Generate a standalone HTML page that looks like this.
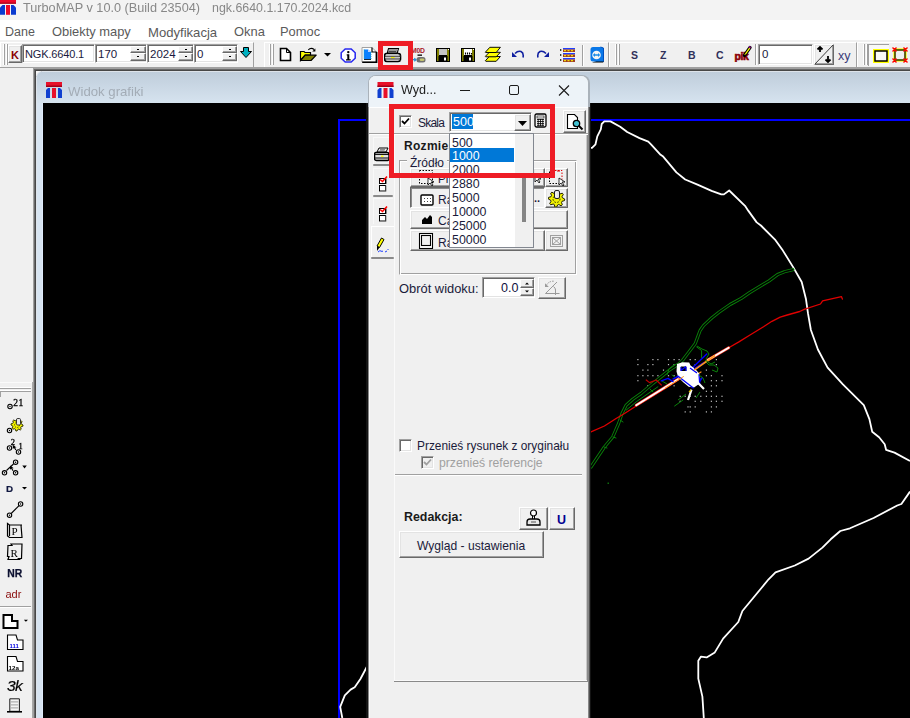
<!DOCTYPE html>
<html><head><meta charset="utf-8">
<style>
*{margin:0;padding:0;box-sizing:border-box}
html,body{width:910px;height:718px;overflow:hidden;background:#f0f0f0;font-family:"Liberation Sans",sans-serif;font-size:12px;color:#000}
.a{position:absolute}
.t{position:absolute;white-space:pre;line-height:1}
#titlebar{left:0;top:0;width:910px;height:20px;background:#f3f3f3}
#menubar{left:0;top:20px;width:910px;height:20px;background:#fff}
#toolbar{left:0;top:40px;width:910px;height:27px;background:#f0f0f0}
.sunk{border-style:solid;border-width:2px;border-color:#808080 #fff #fff #808080;background:#fff}
.sunk::before{content:"";position:absolute;left:-1px;top:-1px;right:-1px;bottom:-1px;border-style:solid;border-width:1px;border-color:#404040 #e3e3e3 #e3e3e3 #404040}
.raised{background:#f0f0f0;border-style:solid;border-width:1px;border-color:#fff #696969 #696969 #fff;box-shadow:inset -1px -1px 0 #a0a0a0}
.grip{width:4px;border-left:1px solid #fff;border-right:1px solid #a0a0a0;box-shadow:-1px 0 0 #a0a0a0}
.tb{background:#fff;border-style:solid;border-width:1px;border-color:#a0a0a0 #fff #fff #a0a0a0;box-shadow:inset 1px 1px 0 #696969,inset -1px -1px 0 #e3e3e3}
.btn3{background:#f0f0f0;border-style:solid;border-width:1px;border-color:#fff #696969 #696969 #fff;box-shadow:inset -1px -1px 0 #a0a0a0,inset 1px 1px 0 #e3e3e3}
.spin{background:#f0f0f0;border-style:solid;border-width:1px;border-color:#fff #696969 #696969 #fff;box-shadow:inset -1px -1px 0 #a0a0a0}
.spin2{background:#f0f0f0;border-style:solid;border-width:1px;border-color:#fff #696969 #696969 #fff;box-shadow:inset -1px -1px 0 #a0a0a0}
.spin::after{content:"";position:absolute;left:50%;top:50%;width:2px;height:1px;margin-left:-1px;margin-top:-1px;background:#000}
</style></head><body>

<!-- title bar -->
<div id="titlebar" class="a">
  <svg class="a" style="left:0;top:0" width="17" height="16" viewBox="0 0 17 16"><rect x="0" y="0" width="16" height="3.7" fill="#ee0a2a"/><rect x="0" y="2.6" width="16" height="1.1" fill="#a0001a"/><path d="M0 14.8V7.5L2.5 5H5V14.8z" fill="#0a3ad0"/><rect x="6" y="5" width="4" height="9.8" fill="#ee0a2a"/><path d="M11 5H13.5L16 7.5V14.8H11z" fill="#0a3ad0"/></svg>
  <div class="t" style="left:23px;top:2px;font-size:12.7px;color:#888;will-change:transform">TurboMAP v 10.0 (Build 23504)</div>
  <div class="t" style="left:212px;top:2px;font-size:12.4px;color:#888;will-change:transform">ngk.6640.1.170.2024.kcd</div>
</div>

<!-- menu bar -->
<div id="menubar" class="a">
  <div class="t" style="left:5px;top:6px;font-size:12.5px;color:#5a5a5a">Dane</div>
  <div class="t" style="left:52px;top:6px;font-size:12.9px;color:#5a5a5a">Obiekty mapy</div>
  <div class="t" style="left:148px;top:6px;font-size:13.1px;color:#5a5a5a">Modyfikacja</div>
  <div class="t" style="left:234px;top:6px;font-size:12.9px;color:#5a5a5a">Okna</div>
  <div class="t" style="left:280px;top:6px;font-size:12.9px;color:#5a5a5a">Pomoc</div>
</div>

<!-- toolbar -->

<div id="toolbar" class="a">
  <!-- band 1 -->
  <div class="a" style="left:0;top:2px;width:254px;height:25px;border-top:1px solid #fff;border-left:1px solid #fff;border-right:1px solid #a0a0a0"></div>
  <div class="a" style="left:3px;top:4px;width:1px;height:21px;background:#fff"></div><div class="a" style="left:4px;top:4px;width:1px;height:21px;background:#a0a0a0"></div>
  <div class="a" style="left:6px;top:4px;width:1px;height:21px;background:#fff"></div><div class="a" style="left:7px;top:4px;width:1px;height:21px;background:#a0a0a0"></div>
  <div class="a btn3" style="left:8px;top:5px;width:14px;height:18px"></div>
  <div class="t" style="left:11px;top:10px;font-size:11px;font-weight:700;color:#8b0000">K</div>
  <div class="a tb" style="left:22px;top:4px;width:73px;height:19px"></div>
  <div class="t" style="left:25px;top:9px;font-size:11px;letter-spacing:-0.15px;color:#1a1a40">NGK.6640.1</div>
  <div class="a tb" style="left:95px;top:4px;width:52px;height:19px"></div>
  <div class="t" style="left:98px;top:9px;font-size:11.5px;color:#1a1a40">170</div>
  <div class="a spin" style="left:130px;top:6px;width:16px;height:7px"></div>
  <div class="a spin" style="left:130px;top:13px;width:16px;height:8px"></div>
  <div class="a tb" style="left:147px;top:4px;width:47px;height:19px"></div>
  <div class="t" style="left:150px;top:9px;font-size:11.5px;color:#1a1a40">2024</div>
  <div class="a spin" style="left:178px;top:6px;width:15px;height:7px"></div>
  <div class="a spin" style="left:178px;top:13px;width:15px;height:8px"></div>
  <div class="a tb" style="left:194px;top:4px;width:44px;height:19px"></div>
  <div class="t" style="left:197px;top:9px;font-size:11.5px;color:#1a1a40">0</div>
  <div class="a spin" style="left:222px;top:6px;width:15px;height:7px"></div>
  <div class="a spin" style="left:222px;top:13px;width:15px;height:8px"></div>
  <svg class="a" style="left:240px;top:7px" width="12" height="11" viewBox="0 0 12 11"><path d="M3.5 0.5h5v4h3l-5.5 6-5.5-6h3z" fill="#00b0c0" stroke="#000" stroke-width="1"/></svg>

  <!-- band 2 -->
  <div class="a" style="left:264px;top:2px;width:345px;height:25px;border-top:1px solid #fff;border-left:1px solid #fff;border-right:1px solid #a0a0a0"></div>
  <div class="a" style="left:269px;top:4px;width:1px;height:21px;background:#fff"></div><div class="a" style="left:270px;top:4px;width:1px;height:21px;background:#a0a0a0"></div>
  <div class="a" style="left:272px;top:4px;width:1px;height:21px;background:#fff"></div><div class="a" style="left:273px;top:4px;width:1px;height:21px;background:#a0a0a0"></div>
  <svg class="a" style="left:279px;top:7px" width="13" height="15" viewBox="0 0 13 15"><path d="M1.5 1.5h6l4 4v8h-10z" fill="#fff" stroke="#000" stroke-width="1.6"/><path d="M7.5 1.5v4h4" fill="none" stroke="#000" stroke-width="1"/></svg>
  <svg class="a" style="left:299px;top:6px" width="19" height="16" viewBox="0 0 19 16"><path d="M1.5 14.5V5.5H5L6 6.5H11.5V9.2H6L1.5 14.5Z" fill="#ffff00" stroke="#000" stroke-width="1.2"/><path d="M1.5 14.5L6.2 9.2H17.2L12 14.5Z" fill="#808000" stroke="#000" stroke-width="1.2" stroke-linejoin="round"/><path d="M9.3 3.9Q12 1.2 15.2 3.6" fill="none" stroke="#000" stroke-width="1.2"/><path d="M13.2 5.6H16.4V2.4Z" fill="#000"/></svg>
  <svg class="a" style="left:324px;top:13px" width="8" height="4" viewBox="0 0 8 4"><path d="M0 0h7l-3.5 3.5z" fill="#000"/></svg>
  <svg class="a" style="left:340px;top:8px" width="17" height="15" viewBox="0 0 17 15"><path d="M5.2 1h6l4 3.8v5.4l-4 3.8h-6l-4-3.8V4.8z" fill="#fff" stroke="#2828f0" stroke-width="1.5"/><circle cx="8.3" cy="4.1" r="1.2" fill="#000"/><path d="M6.7 6.2h2.6v5h1.4v1.3H6V11.2h1.3V7.5H6.7z" fill="#000"/></svg>
  <svg class="a" style="left:361px;top:7px" width="17" height="16" viewBox="0 0 17 16"><path d="M1 0.5h10l4.5 4.5v10H1z" fill="#fff" stroke="#a0a0a0" stroke-width="1"/><path d="M15.5 5v10.3H1.2" fill="none" stroke="#000" stroke-width="1.8"/><path d="M11 0.5v4.5h4.5" fill="none" stroke="#000" stroke-width="1.2"/><path d="M3 2.5h4l3 2.5v7.5H3z" fill="#0a80ff"/><path d="M3 2.5v10M10 5v7.5" stroke="#20a0a0" stroke-width="0.8" stroke-dasharray="1 1"/><path d="M7 2.5v2.5h3" fill="#c0d0ff"/><path d="M3 12.5h7" stroke="#000" stroke-width="0.8"/></svg>
  <!-- printer -->
  <svg class="a" style="left:384px;top:7px" width="18" height="16" viewBox="0 0 18 16"><path d="M4.5 1.5h10l-1.2 4.5H3.3z" fill="#fff" stroke="#000" stroke-width="1.1"/><path d="M5 3h8M4.5 4.6h8" stroke="#000" stroke-width="0.8"/><path d="M2.5 6.5q-2 0-2 2.5v2.5q0 3 2.5 3h11q2.5 0 2.5-2.5V9q0-2.5-2-2.5z" fill="#fff" stroke="#000" stroke-width="1.6"/><rect x="1.5" y="9.8" width="14.5" height="1.6" fill="#c8c8c8"/><rect x="7" y="9.8" width="3.5" height="1.4" fill="#f0f000"/><path d="M1 9.2h15.5M1 12h15.5" stroke="#000" stroke-width="0.9"/><path d="M14 6.8l2.5 2.5M14 11.5l2.5 2" stroke="#808080" stroke-width="0.8"/></svg>
  <!-- MOD -->
  <div class="t" style="left:411px;top:8px;font-size:6.8px;font-weight:700;color:#a81828;letter-spacing:-0.2px">M0D</div>
  <svg class="a" style="left:411px;top:14px" width="16" height="10" viewBox="0 0 16 10"><rect x="6.5" y="0.5" width="4.5" height="1.3" fill="#000"/><rect x="5.5" y="3" width="9" height="5.5" rx="2.5" fill="#707070"/><ellipse cx="11" cy="5.8" rx="2.5" ry="1.2" fill="#c8c870"/><path d="M1 5.7h4M3.3 4.2l1.7 1.5-1.7 1.5" stroke="#3090d0" stroke-width="1.2" fill="none"/></svg>
  <!-- save 1 -->
  <svg class="a" style="left:436px;top:8px" width="14" height="14" viewBox="0 0 14 14"><rect x="0.5" y="0.5" width="13" height="13" fill="#808000" stroke="#000"/><rect x="3" y="1" width="8" height="6" fill="#c4c4c4"/><path d="M3 7.5h8" stroke="#000"/><rect x="2.5" y="8" width="9" height="5.5" fill="#000"/><rect x="8" y="9.5" width="2" height="3" fill="#fff"/><rect x="12" y="1" width="1" height="1" fill="#fff"/></svg>
  <!-- save 2 -->
  <svg class="a" style="left:461px;top:8px" width="14" height="14" viewBox="0 0 14 14"><rect x="0.5" y="0.5" width="13" height="13" fill="#808000" stroke="#000"/><rect x="3" y="1" width="8" height="6" fill="#fff"/><path d="M3 7.5h8" stroke="#000"/><path d="M4.5 4.5v2M6.5 4.5v2M8.5 4.5v2M10.5 5v1.5" stroke="#000" stroke-width="1.1"/><rect x="2.5" y="8" width="9" height="5.5" fill="#000"/><rect x="8" y="9.5" width="2" height="3" fill="#fff"/><rect x="12" y="1" width="1" height="1" fill="#fff"/></svg>
  <!-- layers -->
  <svg class="a" style="left:484px;top:6px" width="18" height="17" viewBox="0 0 18 17"><g fill="#ffff00" stroke="#000" stroke-width="0.95" stroke-linejoin="round"><path d="M1.3 14.8L5.3 10.5H16.4L12.2 15.3H1.8z"/><path d="M1.3 10.4L5.3 6.3H16.4L12.2 10.8H1.8z"/><path d="M1.3 6.3L5.8 1.3H16.4L12.2 6.5H1.8z"/></g></svg>
  <!-- undo -->
  <svg class="a" style="left:512px;top:10px" width="13" height="9" viewBox="0 0 13 9"><path d="M3 3.5Q6 0.5 9 1.5Q12 3 11 7.5" fill="none" stroke="#1020a0" stroke-width="1.6"/><path d="M0 2v5h5z" fill="#1020a0"/></svg>
  <svg class="a" style="left:536px;top:10px" width="13" height="9" viewBox="0 0 13 9"><path d="M10 3.5Q7 0.5 4 1.5Q1 3 2 7.5" fill="none" stroke="#1020a0" stroke-width="1.6"/><path d="M13 2v5H8z" fill="#1020a0"/></svg>
  <!-- list -->
  <svg class="a" style="left:560px;top:8px" width="16" height="14" viewBox="0 0 16 14"><g id="lrow"><path d="M0 1l2 1-2 1z" fill="#000"/><rect x="3" y="0" width="12" height="1.4" fill="#2040ff"/><rect x="3" y="1.4" width="12" height="2.6" fill="#a04020"/><path d="M4 2.7h2M7.5 2.7h2M11 2.7h2" stroke="#ffff00" stroke-width="1"/></g><use href="#lrow" y="5"/><use href="#lrow" y="10"/></svg>
  <div class="a" style="left:582px;top:5px;width:1px;height:21px;background:#a0a0a0"></div><div class="a" style="left:583px;top:5px;width:1px;height:21px;background:#fff"></div>
  <!-- teamviewer -->
  <svg class="a" style="left:589px;top:6px" width="17" height="18" viewBox="0 0 17 18"><path d="M3 16.5h11l1-1v-3z" fill="#000"/><path d="M1.5 1h10l3 1v13.5H4q-2.5 0-2.5-2.5V3.5q0-2.5 2.5-2.5z" fill="#0a78e8"/><path d="M11.5 1l3 1v13.5" fill="none" stroke="#0050c0" stroke-width="1"/><circle cx="7.5" cy="9" r="4.3" fill="#f4f4f4"/><path d="M3.8 9l2.2-2v1.2h3V7l2.2 2-2.2 2V9.8h-3V11z" fill="#1a8ae8"/></svg>

  <!-- band 3 -->
  <div class="a" style="left:609px;top:2px;width:248px;height:25px;border-top:1px solid #fff;border-left:1px solid #fff;border-right:1px solid #a0a0a0"></div>
  <div class="a" style="left:615px;top:4px;width:1px;height:21px;background:#fff"></div><div class="a" style="left:616px;top:4px;width:1px;height:21px;background:#a0a0a0"></div>
  <div class="a" style="left:618px;top:4px;width:1px;height:21px;background:#fff"></div><div class="a" style="left:619px;top:4px;width:1px;height:21px;background:#a0a0a0"></div>
  <div class="t" style="left:631px;top:10px;font-size:10.5px;font-weight:700;color:#30305a">S</div>
  <div class="t" style="left:660px;top:10px;font-size:10.5px;font-weight:700;color:#30305a">Z</div>
  <div class="t" style="left:688px;top:10px;font-size:10.5px;font-weight:700;color:#30305a">B</div>
  <div class="t" style="left:716px;top:10px;font-size:10.5px;font-weight:700;color:#30305a">C</div>
  <svg class="a" style="left:733px;top:10px" width="20" height="12" viewBox="0 0 20 12"><text x="1.5" y="9.5" font-size="10.5" font-weight="700" font-family="Liberation Sans" fill="#8c0008" stroke="#8c0008" stroke-width="0.6" letter-spacing="-0.4">pik</text></svg>
  <svg class="a" style="left:742px;top:5px" width="10" height="13" viewBox="0 0 10 13"><path d="M2.5 10.5L8 2.5" stroke="#000" stroke-width="3.2" stroke-linecap="round"/><path d="M2.8 10L7.8 2.8" stroke="#ffff00" stroke-width="1.3"/><path d="M7.3 2.8l1-1.3" stroke="#900090" stroke-width="2"/><path d="M1.5 11.8l1.5-2.5 1.2 0.8z" fill="#000"/></svg>
  <div class="a" style="left:755px;top:4px;width:1px;height:21px;background:#a0a0a0"></div><div class="a" style="left:756px;top:4px;width:1px;height:21px;background:#fff"></div>
  <div class="a tb" style="left:758px;top:4px;width:55px;height:21px"></div>
  <div class="t" style="left:762px;top:9px;font-size:11.5px;color:#1a1a40">0</div>
  <div class="a btn3" style="left:814px;top:4px;width:20px;height:21px"></div>
  <svg class="a" style="left:814px;top:4px" width="20" height="21" viewBox="0 0 20 21"><path d="M1 20L19 1" stroke="#404040" stroke-width="1"/><path d="M6 3v5M3.5 5.5L6 3l2.5 2.5" fill="none" stroke="#000" stroke-width="1.8"/><path d="M14 12v6M11.5 15.5L14 18l2.5-2.5" fill="none" stroke="#000" stroke-width="1.8"/></svg>
  <div class="t" style="left:838px;top:10px;font-size:12.5px;color:#3a3a78">xy</div>
  <!-- band 4 -->
  <div class="a" style="left:857px;top:2px;width:60px;height:25px;border-top:1px solid #fff;border-left:1px solid #fff"></div>
  <div class="a" style="left:863px;top:4px;width:1px;height:21px;background:#fff"></div><div class="a" style="left:864px;top:4px;width:1px;height:21px;background:#a0a0a0"></div>
  <div class="a" style="left:866px;top:4px;width:1px;height:21px;background:#fff"></div><div class="a" style="left:867px;top:4px;width:1px;height:21px;background:#a0a0a0"></div>
  <div class="a" style="left:868px;top:4px;width:21px;height:22px;background:#f8f8f8;border-top:1px solid #a0a0a0;border-left:1px solid #a0a0a0"></div>
  <svg class="a" style="left:873px;top:9px" width="16" height="14" viewBox="0 0 16 14"><rect x="1" y="1" width="14" height="12" fill="none" stroke="#ffff00" stroke-width="2"/><rect x="2" y="2" width="12" height="10" fill="none" stroke="#000" stroke-width="1.5"/></svg>
  <svg class="a" style="left:892px;top:7px" width="16" height="16" viewBox="0 0 16 16"><rect x="2.5" y="2.5" width="11" height="11" fill="none" stroke="#ffff00" stroke-width="2.2"/><rect x="3" y="3" width="10" height="10" fill="none" stroke="#000" stroke-width="1.2"/><path d="M0.5 0.5l4 4M4.5 0.5l-4 4M11.5 0.5l4 4M15.5 0.5l-4 4M0.5 11.5l4 4M4.5 11.5l-4 4M11.5 11.5l4 4M15.5 11.5l-4 4" stroke="#ff0000" stroke-width="1.4"/></svg>
</div>

<div class="a" style="left:0;top:67px;width:910px;height:1px;background:#a0a0a0"></div>

<!-- MDI child frame -->
<div class="a" style="left:0;top:67px;width:910px;height:1px;background:#a0a0a0"></div>
<div class="a" style="left:33px;top:68px;width:877px;height:650px;background:#a0a0a0"></div>
<div class="a" style="left:34px;top:69px;width:876px;height:649px;background:#696969"></div>
<div class="a" style="left:35px;top:70px;width:875px;height:648px;background:#474747"></div>
<div class="a" style="left:36px;top:71px;width:5px;height:5px;background:#f8f8f8"></div>
<div class="a" style="left:36px;top:71px;width:874px;height:647px;background:#dde3ea;border-top-left-radius:6px"></div>
<div class="a" style="left:37px;top:72px;width:873px;height:646px;background:linear-gradient(#bfcddb,#d6e3ef 31px,#d7e4f1 31px);border-top-left-radius:5px"></div>
<div class="a" style="left:42px;top:103px;width:1px;height:615px;background:#e0ecfb"></div>
<svg class="a" style="left:46px;top:82px" width="17" height="17" viewBox="0 0 17 17">
  <rect x="0" y="0" width="16" height="5" fill="#e8102a"/>
  <rect x="0" y="3.5" width="16" height="1.5" fill="#a00018"/>
  <path d="M0 16V8l2-2h2v10z" fill="#1040d0"/>
  <rect x="6" y="6" width="4" height="10" fill="#e8102a"/>
  <path d="M12 6h2l2 2v8h-4z" fill="#1040d0"/>
</svg>
<div class="t" style="left:68px;top:85px;font-size:13.2px;color:#a3acb6;will-change:transform">Widok grafiki</div>
<div id="canvas" class="a" style="left:43px;top:103px;width:867px;height:615px;background:#000"></div>
<svg class="a" style="left:0;top:0" width="910" height="718" viewBox="0 0 910 718">
  <path d="M339 718V120H910" fill="none" stroke="#0000ff" stroke-width="2"/>
  <g fill="none" stroke="#ffffff" stroke-width="1.8" stroke-linejoin="round">
    <path d="M589.4 147.8L592 147.8 595.5 144.3 597.3 136.4 600.8 129.3 601.7 124 604.3 121.4 610.5 121.4 620.2 126.7 627.2 132 639.5 138.1 648.3 141.6 651 144.3 660.6 154.8 663.2 156.6 676.4 172.4 685.2 179.5 697.5 184.7 711.6 190.9 721.3 194.4 723.9 194.4 729.2 190.5 745 205.8 748.4 210.9 756.7 222.4 760.9 225.5 775.5 240.2 782.9 250.6 793.3 267.4 801.7 282 805.9 298.7 808 313.4 810.9 330 817.9 349.5 827.6 367.6 842.9 384.3 863.8 405.2 869.4 419.1 872.2 431.7 879.1 437.2 884.7 444.2 886.1 449.8 894.5 452.6 910 460.9"/>
    <path d="M910 491.6L901.4 504 897.2 505.5 873.6 518 850 528.3 840.3 531 830.7 539.3 822.4 547.6 808.6 558.6 794.8 565.5 775.5 572.4 768.6 579.3 742.4 611 738.3 622 723.1 638.6 714.8 652.4 706.6 657.4 701 656.6 698.3 660.7 698.3 678.6 702.4 696.6 703.8 718"/>
    <path d="M367.8 665L360.4 679 354.7 687.2 350.6 689.6 344.8 695.4 340.2 706.9 342.3 718"/>
  </g>
  <rect x="607.5" y="482.5" width="1.5" height="1.5" fill="#0e6a0e"/>
  <g fill="#c0c0c0"><rect x="637.3" y="359.0" width="1.2" height="1.2"/><rect x="652.3" y="359.0" width="1.2" height="1.2"/><rect x="657.3" y="359.0" width="1.2" height="1.2"/><rect x="667.9" y="359.0" width="1.2" height="1.2"/><rect x="673.5" y="359.0" width="1.2" height="1.2"/><rect x="678.5" y="359.0" width="1.2" height="1.2"/><rect x="689.6" y="359.0" width="1.2" height="1.2"/><rect x="694.6" y="359.0" width="1.2" height="1.2"/><rect x="715.8" y="359.0" width="1.2" height="1.2"/><rect x="637.3" y="364.0" width="1.2" height="1.2"/><rect x="647.3" y="364.0" width="1.2" height="1.2"/><rect x="652.3" y="364.0" width="1.2" height="1.2"/><rect x="667.9" y="364.0" width="1.2" height="1.2"/><rect x="673.5" y="364.0" width="1.2" height="1.2"/><rect x="694.6" y="364.0" width="1.2" height="1.2"/><rect x="715.8" y="364.0" width="1.2" height="1.2"/><rect x="642.3" y="369.5" width="1.2" height="1.2"/><rect x="647.3" y="369.5" width="1.2" height="1.2"/><rect x="662.9" y="369.5" width="1.2" height="1.2"/><rect x="705.8" y="369.5" width="1.2" height="1.2"/><rect x="637.3" y="375.1" width="1.2" height="1.2"/><rect x="642.3" y="375.1" width="1.2" height="1.2"/><rect x="647.3" y="375.1" width="1.2" height="1.2"/><rect x="652.3" y="375.1" width="1.2" height="1.2"/><rect x="657.3" y="375.1" width="1.2" height="1.2"/><rect x="662.9" y="375.1" width="1.2" height="1.2"/><rect x="667.9" y="375.1" width="1.2" height="1.2"/><rect x="673.5" y="375.1" width="1.2" height="1.2"/><rect x="705.8" y="375.1" width="1.2" height="1.2"/><rect x="710.8" y="375.1" width="1.2" height="1.2"/><rect x="721.4" y="375.1" width="1.2" height="1.2"/><rect x="637.3" y="380.1" width="1.2" height="1.2"/><rect x="710.8" y="380.1" width="1.2" height="1.2"/><rect x="715.8" y="380.1" width="1.2" height="1.2"/><rect x="721.4" y="380.1" width="1.2" height="1.2"/><rect x="647.3" y="385.2" width="1.2" height="1.2"/><rect x="673.5" y="385.2" width="1.2" height="1.2"/><rect x="710.8" y="385.2" width="1.2" height="1.2"/><rect x="715.8" y="385.2" width="1.2" height="1.2"/><rect x="705.8" y="390.7" width="1.2" height="1.2"/><rect x="710.8" y="390.7" width="1.2" height="1.2"/><rect x="679.6" y="395.7" width="1.2" height="1.2"/><rect x="684.6" y="395.7" width="1.2" height="1.2"/><rect x="689.6" y="395.7" width="1.2" height="1.2"/><rect x="694.6" y="395.7" width="1.2" height="1.2"/><rect x="700.2" y="395.7" width="1.2" height="1.2"/><rect x="705.8" y="395.7" width="1.2" height="1.2"/><rect x="710.8" y="395.7" width="1.2" height="1.2"/><rect x="715.8" y="395.7" width="1.2" height="1.2"/><rect x="721.4" y="395.7" width="1.2" height="1.2"/><rect x="679.6" y="400.7" width="1.2" height="1.2"/><rect x="694.6" y="400.7" width="1.2" height="1.2"/><rect x="700.2" y="400.7" width="1.2" height="1.2"/><rect x="710.8" y="400.7" width="1.2" height="1.2"/><rect x="715.8" y="400.7" width="1.2" height="1.2"/><rect x="721.4" y="400.7" width="1.2" height="1.2"/><rect x="687.4" y="406.3" width="1.2" height="1.2"/><rect x="689.6" y="406.3" width="1.2" height="1.2"/><rect x="694.6" y="406.3" width="1.2" height="1.2"/><rect x="710.8" y="406.3" width="1.2" height="1.2"/><rect x="715.8" y="406.3" width="1.2" height="1.2"/><rect x="684.6" y="411.3" width="1.2" height="1.2"/><rect x="689.6" y="411.3" width="1.2" height="1.2"/><rect x="705.8" y="411.3" width="1.2" height="1.2"/><rect x="710.8" y="411.3" width="1.2" height="1.2"/></g>
  <g fill="none" stroke-linejoin="round" stroke-linecap="round">
    <path d="M792.8 269.7L784.4 271.8 777.5 274.6 769.1 280.9 760.7 285.8 749.6 292.7 741.3 298.3 730.1 304.5 719 312.2 712 317.8 703.7 325.4 700.2 330.3 698.1 335.9 695.3 343.5 688.4 352.6 682.8 360 679.6 363.3 669.6 370 652.9 383.4 641.2 393.4 632.8 399.3 626.1 405.2 622 413.5 618.6 423.5 612.8 436.9 604.4 447 597.7 457 591 467" stroke="#0a820a" stroke-width="3.2"/>
    <path d="M792.8 269.7L784.4 271.8 777.5 274.6 769.1 280.9 760.7 285.8 749.6 292.7 741.3 298.3 730.1 304.5 719 312.2 712 317.8 703.7 325.4 700.2 330.3 698.1 335.9 695.3 343.5 688.4 352.6 682.8 360 679.6 363.3 669.6 370 652.9 383.4 641.2 393.4 632.8 399.3 626.1 405.2 622 413.5 618.6 423.5 612.8 436.9 604.4 447 597.7 457 591 467" stroke="#000" stroke-width="1.4"/>
    <path d="M657.9 386.8L636.2 401.8 626.1 410.2 M696.7 347L701.6 350.5 701.6 357.5 M674.6 406L683 400 M650 389l3 3 M662 381l5 3 M672 375l4 3 M620 420l3 2 M613 437l3 1 M604 447l3 1" stroke="#0a820a" stroke-width="1"/>
    <path d="M842.4 299.1L841.4 296.6 822.6 300.8 820.5 304 804.8 309.2 799.7 311.5 787.2 315 780.2 317.1 771.9 321.3 763.5 326.8 749.6 335.2 738.5 342.1 728.7 347.7 707.8 360 678 380 666.3 387.6 652.9 396 636.2 406 624.5 413.5 616.1 418.5 604.4 426 589.3 432.7" stroke="#e00000" stroke-width="1.3"/>
    <path d="M728.7 347.7L707.8 360 M678 379.2L636.2 405.2" stroke="#ff3020" stroke-width="3"/>
    <path d="M728.7 347.7L707.8 360 M678 379.2L636.2 405.2" stroke="#ffffff" stroke-width="1.9"/>
    <path d="M646.2 380L649.5 382.6 656.2 380 661.3 385" stroke="#c00000" stroke-width="1.2"/>
    <path d="M661.3 380.9L668 378.4 673 381.7 M706.8 353.9L692.4 367.8 M690 386l8-2 4-6 M679 376l-6 3" stroke="#0000ff" stroke-width="1.4"/>
    <path d="M701 372L686 381" stroke="#ff9020" stroke-width="1.2"/>
  </g>
  <path d="M677 364L682.4 362.2 689.2 362.6 690.5 365.5 695 368.8 699 373.2 700.2 378.5 699 384 694 387.5 688.7 386.8 683.5 382.5 678.2 377.2 676.5 371.5Z" fill="#fff"/>
  <path d="M680.8 366.5h5.5v4.5h-5.5z" fill="#000"/>
  <path d="M681 370.5l5-4M681 367v4M686 367v4" stroke="#0000ff" stroke-width="1.2"/>
  <g fill="none" stroke-width="1.3">
    <path d="M677.5 375.7L693.6 388.2 M699 374.3L699.8 384.7 M690 368L697 373 M694.2 368.7L704 362.5" stroke="#0000ff"/>
    <path d="M697 346l5 3 5 2 2 3-3 5 M705 361l4 4 5 0 4 3-1 4-5-2 M699 375l4 3 2 5" stroke="#0a820a" stroke-width="1"/>
    <path d="M715 355.5L694.2 370.1" stroke="#ff9a20" stroke-width="1.6"/>
    <path d="M683.8 376.4L665 388.2" stroke="#ff9a20" stroke-width="1"/>
    <path d="M691.5 389.6L688 400 M698.4 383.3L704 389" stroke="#fff" stroke-width="2.2"/>
    <path d="M686 394l-8 6 M700 392l-4 6 M705 360l6 4 4 -2 M675 364l-6 5 -2 6" stroke="#0a820a" stroke-width="1"/>
    <path d="M689 392l2-2" stroke="#e0c000" stroke-width="1.2"/>
  </g>
</svg>
<!-- left toolbar -->
<div class="a" style="left:0;top:387px;width:31px;height:1px;background:#fff"></div>
<div class="a" style="left:0;top:388px;width:31px;height:1px;background:#a0a0a0"></div>
<div class="a" style="left:0;top:390px;width:31px;height:1px;background:#fff"></div>
<div class="a" style="left:0;top:391px;width:31px;height:1px;background:#a0a0a0"></div>

<!-- left toolbar icons -->
<svg class="a" style="left:0;top:392px;will-change:transform" width="32" height="326" viewBox="0 392 32 326">
  <g fill="none" stroke="#000" stroke-width="1.1">
    <circle cx="10" cy="406.5" r="2.2"/>
    <circle cx="9.5" cy="430.5" r="2.2"/>
    <circle cx="9.5" cy="448" r="2.2"/><circle cx="18.5" cy="452" r="2.2"/>
    <circle cx="15.6" cy="462.2" r="2.2"/><circle cx="4.5" cy="472.8" r="2.2"/><circle cx="15.6" cy="472.8" r="2.2"/>
    <path d="M6.5 470.5L13.5 464"/>
    <circle cx="20.6" cy="504" r="2.2"/><circle cx="9.5" cy="515.2" r="2.2"/>
    <path d="M11.2 513.5L19 505.7"/>
  </g>
  <g fill="#000"><circle cx="10" cy="406.5" r="0.7"/><circle cx="9.5" cy="430.5" r="0.7"/><circle cx="9.5" cy="448" r="0.7"/><circle cx="18.5" cy="452" r="0.7"/><circle cx="15.6" cy="462.2" r="0.7"/><circle cx="4.5" cy="472.8" r="0.7"/><circle cx="15.6" cy="472.8" r="0.7"/><circle cx="20.6" cy="504" r="0.7"/><circle cx="9.5" cy="515.2" r="0.7"/></g>
  <text x="13.2" y="405.5" font-size="9.5" font-family="Liberation Serif" fill="#000" stroke="#000" stroke-width="0.3" letter-spacing="0.6">21</text>
  <text x="10.8" y="444.5" font-size="8.5" font-family="Liberation Serif" fill="#000" stroke="#000" stroke-width="0.3">2</text>
  <text x="18.5" y="448.5" font-size="8.5" font-family="Liberation Serif" fill="#000" stroke="#000" stroke-width="0.3">1</text>
  <path d="M12.8 444.8v4.2l1.2-1 1.4 2.2 0.9-0.5-1.3-2.1h1.6z" fill="#000"/>
  <path d="M10 465.5v4.2l1.2-1 1.4 2.2 0.9-0.5-1.3-2.1h1.6z" fill="#000"/>
  <!-- gear -->
  <g transform="translate(11,418)"><path d="M12.0 7.0 11.9 8.2 10.2 8.7 9.7 9.5 10.2 11.2 9.3 12.0 7.7 11.2 6.9 11.4 6.0 13.0 4.8 12.9 4.3 11.2 3.5 10.7 1.8 11.2 1.0 10.3 1.8 8.7 1.6 7.9 0.0 7.0 0.1 5.8 1.8 5.3 2.3 4.5 1.8 2.8 2.7 2.0 4.3 2.8 5.1 2.6 6.0 1.0 7.2 1.1 7.7 2.8 8.5 3.3 10.2 2.8 11.0 3.7 10.2 5.3 10.4 6.1Z" fill="#f0f000" stroke="#202000" stroke-width="0.9"/><circle cx="6" cy="7" r="2.5" fill="none" stroke="#303000" stroke-width="0.9" stroke-dasharray="1.2 1.2"/><rect x="5.5" y="0.5" width="4" height="6.5" rx="1.2" fill="#e8e8e8" stroke="#222" stroke-width="0.9"/></g>
  <!-- dropdown triangles -->
  <path d="M22.3 465.6h4.5l-2.25 2.8z M22 487h5l-2.5 2.5z M23.8 619.7h4.2l-2.1 2z" fill="#000"/>
  <text x="6" y="492" font-size="9.8" font-weight="700" font-family="Liberation Sans" fill="#101840" stroke="#101840" stroke-width="0.2">D</text>
  <!-- P box -->
  <path d="M7.5 523.5l2 1.5h11.5l1 12.5h-12.5l-2-1.5z M9.5 525v11M21 525l1 0" fill="none" stroke="#000" stroke-width="1.2"/>
  <text x="11.5" y="535" font-size="11" font-family="Liberation Serif" fill="#000">P</text>
  <path d="M8 545.5h4l-1-1.5h11l-0.5 14.5h-3l1 1h-11.5l1-3h-1.5z" fill="none" stroke="#000" stroke-width="1.2"/>
  <text x="10.5" y="556.5" font-size="11" font-family="Liberation Serif" fill="#000">R</text>
  <text x="7.2" y="577.2" font-size="10.4" font-weight="700" font-family="Liberation Sans" fill="#0c1030" stroke="#0c1030" stroke-width="0.25">NR</text>
  <text x="5.5" y="597.5" font-size="11" font-family="Liberation Sans" fill="#8a0c0c">adr</text>
  <rect x="0" y="606" width="31" height="1" fill="#a0a0a0"/>
  <rect x="0" y="607" width="31" height="1" fill="#fff"/>
  <path d="M3.5 615h8.5v6h5.5v7h-14z" fill="#fff" stroke="#000" stroke-width="2"/>
  <path d="M7.5 635h8.5l1.5 5h5.5v9.5h-15.5z" fill="#fff" stroke="#000" stroke-width="1.1"/>
  <text x="9.5" y="648" font-size="6" font-weight="700" font-family="Liberation Sans" fill="#0000e0">111</text>
  <path d="M7.5 656.5h8.5l1.5 5h5.5v9.5h-15.5z" fill="#fff" stroke="#000" stroke-width="1.1"/>
  <text x="8.5" y="669.5" font-size="6.2" font-weight="700" font-family="Liberation Sans" fill="#000">12a</text>
  <text x="7" y="690.5" font-size="15.5" font-style="italic" font-family="Liberation Sans" fill="#000" stroke="#000" stroke-width="0.2" letter-spacing="-0.5">3k</text>
  <path d="M9.8 698.8h9.6v12.5H9.8z" fill="#f4f4f4" stroke="#1a1a1a" stroke-width="1"/>
  <path d="M11 701.8h7.2M11 704.8h7.2M11 707.8h7.2" stroke="#b0b0b0" stroke-width="1.2"/>
  <path d="M7 711.8h15" stroke="#000" stroke-width="1.6"/>
</svg>
<div class="a" style="left:0;top:391px;width:1px;height:6px;background:#a0a0a0"></div>
<div class="a" style="left:0;top:382px;width:32px;height:1px;background:#fafafa"></div>
<div class="a" style="left:32px;top:382px;width:1px;height:336px;background:#a8a8a8"></div>
<!-- dialog -->
<div class="a" style="left:366px;top:103px;width:225px;height:615px;background:#141414"></div>
<div class="a" style="left:368px;top:75px;width:222px;height:650px;background:linear-gradient(180deg,#aab2ba 0,#aab2ba 32px,#888 32px);border-radius:8px 8px 0 0"></div>
<div class="a" style="left:589px;top:107px;width:1px;height:611px;background:#505050"></div>
<div class="a" style="left:369px;top:76px;width:219px;height:650px;background:#f0f0f0;border-radius:7px 7px 0 0;overflow:hidden;box-shadow:inset 1px 0 0 #fafafa">
  <div class="a" style="left:0;top:0;width:219px;height:31px;background:#edf3f8"></div>
  <div class="a" style="left:0;top:31px;width:219px;height:1px;background:#fff"></div>
</div>
<svg class="a" style="left:377px;top:82px" width="17" height="17" viewBox="0 0 17 17">
  <rect x="0.5" y="0" width="16" height="5" fill="#e8102a"/>
  <rect x="0.5" y="3.5" width="16" height="1.5" fill="#a00018"/>
  <path d="M0.5 16V8l2-2h2v10z" fill="#1040d0"/>
  <rect x="6.5" y="6" width="4" height="10" fill="#e8102a"/>
  <path d="M12.5 6h2l2 2v8h-4z" fill="#1040d0"/>
</svg>
<div class="t" style="left:401px;top:84px;font-size:12.6px;color:#1b1b1b;will-change:transform">Wyd...</div>
<div class="a" style="left:460px;top:90px;width:10px;height:1px;background:#1b1b1b"></div>
<div class="a" style="left:509px;top:85px;width:10px;height:10px;border:1px solid #1b1b1b;border-radius:2px"></div>
<svg class="a" style="left:558px;top:85px" width="12" height="11" viewBox="0 0 12 11"><path d="M1 0.5l10 10M11 0.5l-10 10" stroke="#1b1b1b" stroke-width="1.1"/></svg>

<!-- Skala row -->
<div class="a" style="left:399px;top:115px;width:13px;height:13px;background:#fff;border-style:solid;border-width:1px;border-color:#a0a0a0 #fff #fff #a0a0a0;box-shadow:inset 1px 1px 0 #696969,inset -1px -1px 0 #e3e3e3"></div>
<svg class="a" style="left:401px;top:117px" width="9" height="9" viewBox="0 0 9 9"><path d="M1 4l2.5 2.5L8 1.5" fill="none" stroke="#000" stroke-width="1.8"/></svg>
<div class="t" style="left:418px;top:117px;font-size:12px;letter-spacing:-0.8px;color:#1a1a3a">Skala</div>
<div class="a tb" style="left:449px;top:112px;width:83px;height:20px"></div>
<div class="a" style="left:452px;top:114px;width:21px;height:15px;background:#0078d7"></div>
<div class="t" style="left:453px;top:116px;font-size:12.5px;color:#fff">500</div>
<div class="a btn3" style="left:514px;top:114px;width:17px;height:17px"></div>
<svg class="a" style="left:518px;top:121px" width="9" height="5" viewBox="0 0 9 5"><path d="M0 0h9L4.5 5z" fill="#000"/></svg>
<svg class="a" style="left:534px;top:113px" width="13" height="15" viewBox="0 0 13 15"><rect x="1" y="1" width="11" height="13" rx="1.5" fill="#f4f4f4" stroke="#000" stroke-width="1.3"/><rect x="3" y="3" width="7" height="2" fill="#fff" stroke="#000" stroke-width="0.6"/><path d="M3 6.5h7M3 8.5h7M3 10.5h7M3 12.3h7M4.2 6v7M6.5 6v7M8.8 6v7" stroke="#000" stroke-width="0.8"/></svg>
<div class="a btn3" style="left:563px;top:110px;width:23px;height:23px"></div>
<svg class="a" style="left:566px;top:113px" width="18" height="18" viewBox="0 0 18 18"><path d="M1.5 1.5h7l3 3v11h-10z" fill="#fff" stroke="#000" stroke-width="1.1"/><circle cx="10.5" cy="10.5" r="3.2" fill="#40c0d0" stroke="#000" stroke-width="1.3"/><path d="M12.5 12.5l4 4" stroke="#000" stroke-width="2"/></svg>
<div class="a" style="left:369px;top:133px;width:219px;height:1px;background:#a0a0a0"></div>
<div class="a" style="left:369px;top:134px;width:219px;height:1px;background:#fff"></div>

<!-- vertical tabs -->
<div class="a" style="left:373px;top:137px;width:20px;height:28px;border-left:1px solid #f8f8f8;border-top:1px solid #f8f8f8"></div>
<div class="a" style="left:373px;top:164px;width:20px;height:2px;background:#8a8a8a;border-radius:1px"></div>
<svg class="a" style="left:374px;top:147px" width="16" height="15" viewBox="0 0 16 15"><path d="M5 1h9l-2 4H3z" fill="#f0f0f0" stroke="#000" stroke-width="1"/><path d="M6 2.6h5M5.5 3.8h5" stroke="#555" stroke-width="0.7"/><path d="M2 5.5q-1.5 0-1.5 2v4q0 2 2 2h11q1.5 0 1.5-2v-4q0-2-2-2z" fill="#d0d0d0" stroke="#000" stroke-width="1.4"/><rect x="2" y="8.5" width="12" height="1.6" fill="#e8e8e8"/><rect x="7" y="8.5" width="2.5" height="1.4" fill="#ffff00"/><path d="M1 7.5h14M1 11h14" stroke="#000" stroke-width="0.9"/></svg>
<div class="a" style="left:373px;top:168px;width:20px;height:28px;border-left:1px solid #f8f8f8;border-top:1px solid #f8f8f8"></div>
<div class="a" style="left:373px;top:195px;width:20px;height:2px;background:#8a8a8a;border-radius:1px"></div>
<svg class="a" style="left:378px;top:175px" width="10" height="18" viewBox="0 0 10 18"><rect x="1.5" y="3.5" width="6" height="5" fill="#fff" stroke="#000"/><path d="M8 8.5h0.5v-5" stroke="#888"/><rect x="1.5" y="10.5" width="6" height="5.5" fill="#fff" stroke="#000"/><path d="M1.5 16.5h6.5v-6" stroke="#888" fill="none"/><path d="M2 4.5l2.5 2L9 1.5" fill="none" stroke="#ff0000" stroke-width="1.6"/></svg>
<div class="a" style="left:373px;top:198px;width:20px;height:26px;border-left:1px solid #f8f8f8;border-top:1px solid #f8f8f8"></div>
<svg class="a" style="left:378px;top:205px" width="10" height="18" viewBox="0 0 10 18"><rect x="1.5" y="3.5" width="6" height="5" fill="#fff" stroke="#000"/><path d="M8 8.5h0.5v-5" stroke="#888"/><rect x="1.5" y="10.5" width="6" height="5.5" fill="#fff" stroke="#000"/><path d="M1.5 16.5h6.5v-6" stroke="#888" fill="none"/><path d="M2 4.5l2.5 2L9 1.5" fill="none" stroke="#ff0000" stroke-width="1.6"/></svg>
<div class="a" style="left:371px;top:226px;width:23px;height:31px;border-left:1px solid #fff;border-top:1px solid #fff"></div>
<div class="a" style="left:371px;top:257px;width:23px;height:2px;background:#8a8a8a;border-radius:1px"></div>
<svg class="a" style="left:375px;top:236px" width="16" height="18" viewBox="0 0 16 18"><path d="M6.5 2l2.5 1.5-4.5 8-2.5-1.5z" fill="#ffff00" stroke="#000" stroke-width="1"/><path d="M2 10l2.5 1.5-2.5 3.5z" fill="#000"/><path d="M3 16q2-2 3-1q1 1 2 0M10 16l2-1M13 13v1" stroke="#2040ff" stroke-width="1" fill="none"/></svg>

<!-- tab page borders -->
<div class="a" style="left:394px;top:135px;width:1px;height:546px;background:#fafafa"></div>
<div class="a" style="left:586px;top:135px;width:1px;height:546px;background:#c8c8c8"></div>
<div class="a" style="left:587px;top:135px;width:1px;height:547px;background:#8a8a8a"></div>
<div class="a" style="left:394px;top:680px;width:193px;height:1px;background:#fafafa"></div>
<div class="a" style="left:394px;top:681px;width:194px;height:1px;background:#8a8a8a"></div>

<!-- Rozmiar -->
<div class="t" style="left:404px;top:140px;font-size:12px;font-weight:700;color:#1a1a1a;letter-spacing:0.3px">Rozmieszczenie</div>
<!-- groupbox -->
<div class="a" style="left:399px;top:160px;width:178px;height:115px;border-style:solid;border-width:1px;border-color:#a0a0a0 #fff #fff #a0a0a0;box-shadow:inset 1px 1px 0 #fff,inset -1px -1px 0 #a0a0a0"></div>
<div class="a" style="left:407px;top:156px;width:40px;height:8px;background:#f0f0f0"></div>
<div class="t" style="left:410px;top:157px;font-size:12px;color:#1a1a3a">Źródło</div>
<!-- buttons -->
<div class="a btn3" style="left:410px;top:168px;width:135px;height:19px"></div>
<svg class="a" style="left:419px;top:170px" width="16" height="16" viewBox="0 0 16 16"><rect x="0.5" y="0.5" width="13" height="13" fill="none" stroke="#000" stroke-dasharray="1.5 1.5"/><path d="M9 8l0 7 2-2 2 3 1-1-2-3h3z" fill="#fff" stroke="#000" stroke-width="0.8"/></svg>
<div class="t" style="left:438px;top:174px;font-size:11.5px;color:#1a1a3a">Pi</div>
<div class="a" style="left:410px;top:187px;width:135px;height:21px;background:#f0f0f0;border-style:solid;border-width:1px;border-color:#696969 #fff #fff #696969;box-shadow:inset 1px 1px 0 #8a8a8a"></div>
<svg class="a" style="left:420px;top:194px" width="14" height="12" viewBox="0 0 14 12"><rect x="1" y="1" width="12" height="10" rx="1" fill="#fff" stroke="#000" stroke-width="1.4"/><path d="M4 4.5h1M7 4.5h1M10 4.5h1M4 7.5h1M7 7.5h1M10 7.5h1" stroke="#444" stroke-width="1"/></svg>
<div class="t" style="left:438px;top:194px;font-size:12px;color:#1a1a3a">Ra</div>
<div class="a btn3" style="left:410px;top:210px;width:158px;height:19px"></div>
<svg class="a" style="left:422px;top:215px" width="10" height="9" viewBox="0 0 10 9"><path d="M0 9V5l3-3 2 2 3-4 2 2v7z" fill="#000"/></svg>
<div class="t" style="left:438px;top:215px;font-size:12px;color:#1a1a3a">Ca</div>
<div class="a btn3" style="left:410px;top:230px;width:135px;height:21px"></div>
<svg class="a" style="left:418px;top:232px" width="16" height="17" viewBox="0 0 16 17"><rect x="1.5" y="1.5" width="13" height="15" fill="#fff" stroke="#000" stroke-width="1.1"/><rect x="3.5" y="3.5" width="9" height="10" fill="#f0f0f0" stroke="#000" stroke-width="1.1"/></svg>
<div class="t" style="left:438px;top:236.5px;font-size:12px;color:#1a1a3a">Ra</div>
<div class="a btn3" style="left:533px;top:168px;width:12px;height:19px"></div>
<svg class="a" style="left:533px;top:174px" width="10" height="10" viewBox="0 0 10 10"><path d="M2 1l0 7 2-2 2 3 1-1-2-3h3z" fill="#fff" stroke="#000" stroke-width="0.8"/></svg>
<div class="a btn3" style="left:545px;top:168px;width:23px;height:19px"></div>
<svg class="a" style="left:548px;top:169px" width="18" height="17" viewBox="0 0 18 17"><path d="M1.5 2.5v12h11" fill="none" stroke="#000" stroke-dasharray="1.5 1.5"/><path d="M4 1.5h10v9" fill="none" stroke="#e00000" stroke-dasharray="1.5 1.5"/><path d="M11 9l0 7 2-2 2 3 1-1-2-3h3z" fill="#fff" stroke="#000" stroke-width="0.8"/><path d="M9 2h3" stroke="#e00000"/></svg>
<div class="t" style="left:534px;top:193px;font-size:11px;font-weight:700;color:#1a1a3a">..</div>
<div class="a btn3" style="left:545px;top:188px;width:23px;height:20px"></div>
<svg class="a" style="left:548px;top:189px" width="18" height="18" viewBox="0 0 18 18"><path d="M16.7 10.0 16.5 11.6 14.0 12.3 13.5 13.3 14.3 15.8 13.1 16.8 10.8 15.5 9.7 15.9 8.5 18.2 6.9 18.0 6.2 15.5 5.2 15.0 2.7 15.8 1.7 14.6 3.0 12.3 2.6 11.2 0.3 10.0 0.5 8.4 3.0 7.7 3.5 6.7 2.7 4.2 3.9 3.2 6.2 4.5 7.3 4.1 8.5 1.8 10.1 2.0 10.8 4.5 11.8 5.0 14.3 4.2 15.3 5.4 14.0 7.7 14.4 8.8Z" fill="#f0f000" stroke="#202000" stroke-width="1"/><circle cx="8.5" cy="10" r="3.5" fill="none" stroke="#303000" stroke-width="1" stroke-dasharray="1.5 1.5"/><rect x="6.5" y="1.5" width="5" height="8" rx="1.5" fill="#e8e8e8" stroke="#222" stroke-width="1"/><path d="M8 3v5" stroke="#fff" stroke-width="1"/></svg>
<div class="a btn3" style="left:545px;top:230px;width:23px;height:21px;background:#f0f0f0"></div>
<svg class="a" style="left:550px;top:235px" width="13" height="12" viewBox="0 0 13 12"><rect x="0.5" y="0.5" width="12" height="11" fill="none" stroke="#a0a0a0"/><rect x="2.5" y="2.5" width="8" height="7" fill="none" stroke="#a0a0a0"/><path d="M2.5 2.5l8 7M10.5 2.5l-8 7" stroke="#a0a0a0"/></svg>

<!-- Obrot -->
<div class="t" style="left:399px;top:283px;font-size:12.9px;color:#1a1a3a">Obrót widoku:</div>
<div class="a tb" style="left:482px;top:277px;width:53px;height:21px"></div>
<div class="t" style="left:501px;top:282px;font-size:12.5px;color:#101040">0.0</div>
<div class="a spin2" style="left:520px;top:279px;width:14px;height:9px"></div>
<div class="a spin2" style="left:520px;top:288px;width:14px;height:8px"></div>
<svg class="a" style="left:520px;top:279px" width="14" height="17" viewBox="0 0 14 17"><path d="M5 5.5h4L7 3.5zM5 11.5h4L7 13.5z" fill="#000"/></svg>
<div class="a btn3" style="left:538px;top:277px;width:28px;height:22px"></div>
<svg class="a" style="left:538px;top:278px" width="28" height="21" viewBox="0 0 28 21"><g stroke="#9a9a9a" fill="none" stroke-width="1"><path d="M7.5 15.5H21.5M7.5 15.5L19 4M17.5 11.5V17M15.5 8.5Q17.5 10 17.5 12"/><path d="M15.7 3.2Q11 3 8.5 7" stroke-dasharray="1.6 1"/></g><path d="M7 5.2V9H10.8Z" fill="#9a9a9a"/></svg>

<!-- Przenies -->
<div class="a" style="left:399px;top:439px;width:13px;height:13px;background:#fff;border-style:solid;border-width:1px;border-color:#a0a0a0 #fff #fff #a0a0a0;box-shadow:inset 1px 1px 0 #696969,inset -1px -1px 0 #e3e3e3"></div>
<div class="t" style="left:417px;top:441px;font-size:11.9px;color:#1a1a3a">Przenieś rysunek z oryginału</div>
<div class="a" style="left:421px;top:456px;width:13px;height:13px;background:#f0f0f0;border-style:solid;border-width:1px;border-color:#a0a0a0 #fff #fff #a0a0a0;box-shadow:inset 1px 1px 0 #696969,inset -1px -1px 0 #e3e3e3"></div>
<svg class="a" style="left:423px;top:458px" width="9" height="9" viewBox="0 0 9 9"><path d="M1 4l2.5 2.5L8 1.5" fill="none" stroke="#a0a0a0" stroke-width="1.8"/></svg>
<div class="t" style="left:439px;top:457px;font-size:12.2px;color:#a0a0a0">przenieś referencje</div>
<div class="a" style="left:395px;top:474px;width:187px;height:1px;background:#a0a0a0"></div>
<div class="a" style="left:395px;top:475px;width:187px;height:1px;background:#fff"></div>

<!-- Redakcja -->
<div class="t" style="left:404px;top:511px;font-size:12.4px;font-weight:700;color:#1a1a1a">Redakcja:</div>
<div class="a btn3" style="left:519px;top:507px;width:29px;height:23px"></div>
<svg class="a" style="left:525px;top:509px" width="17" height="18" viewBox="0 0 17 18"><circle cx="8.5" cy="4" r="3" fill="#fff" stroke="#000" stroke-width="1.2"/><path d="M7.5 7v3M9.5 7v3" stroke="#000"/><path d="M2 16v-3q0-3 3-3h7q3 0 3 3v3z" fill="#e8e8e8" stroke="#000" stroke-width="1.3"/><path d="M6 13h5" stroke="#555"/></svg>
<div class="a btn3" style="left:549px;top:507px;width:26px;height:23px"></div>
<div class="t" style="left:557px;top:514px;font-size:12.5px;font-weight:700;color:#000090">U</div>
<div class="a btn3" style="left:399px;top:531px;width:145px;height:27px"></div>
<div class="t" style="left:417px;top:540px;font-size:12.1px;color:#1a1a3a">Wygląd - ustawienia</div>


<!-- dropdown list -->
<div class="a" style="left:449px;top:133px;width:85px;height:115px;background:#fff;border:1px solid #828790"></div>
<div class="a" style="left:515px;top:134px;width:18px;height:113px;background:#f0f0f0"></div>
<div class="a" style="left:522px;top:177px;width:4px;height:45px;background:#858585"></div>
<div class="a" style="left:450px;top:148px;width:64px;height:14px;background:#0078d7"></div>
<div class="t" style="left:452px;top:136px;font-size:12.4px;line-height:14px;color:#1a1a3a">500</div>
<div class="t" style="left:452px;top:150px;font-size:12.4px;color:#fff">1000</div>
<div class="t" style="left:452px;top:164px;font-size:12.4px;color:#1a1a3a">2000</div>
<div class="t" style="left:452px;top:178px;font-size:12.4px;color:#1a1a3a">2880</div>
<div class="t" style="left:452px;top:192px;font-size:12.4px;color:#1a1a3a">5000</div>
<div class="t" style="left:452px;top:206px;font-size:12.4px;color:#1a1a3a">10000</div>
<div class="t" style="left:452px;top:220px;font-size:12.4px;color:#1a1a3a">25000</div>
<div class="t" style="left:452px;top:234px;font-size:12.4px;color:#1a1a3a">50000</div>

<!-- red highlight around Skala -->
<div class="a" style="left:389px;top:104px;width:166px;height:74px;border:5px solid #ee1c25"></div>
<!-- printer highlight -->
<div class="a" style="left:378px;top:41px;width:35px;height:29px;border:5px solid #ee1c25"></div>
</body></html>
